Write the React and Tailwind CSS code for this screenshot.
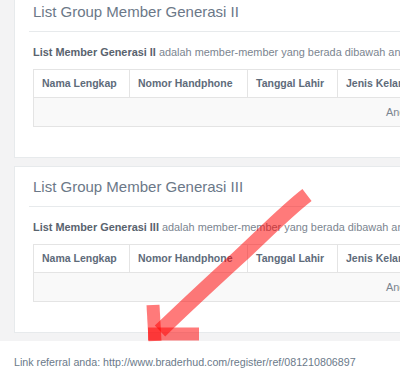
const columns = ['Nama Lengkap', 'Nomor Handphone', 'Tanggal Lahir', 'Jenis Kelamin', 'Alamat', 'Tanggal Daftar'];
const widths = ['w-[96px]', 'w-[118px]', 'w-[90px]', 'w-[110px]', 'w-[110px]', 'w-[120px]'];

const MemberPanel = ({ generasi }) => (
    <div className="w-[440px] shrink-0 border border-[#e7eaec] bg-white pb-[30px] pt-[10px]">
        <div className="mx-[14px] border-b border-[#e7eaec] px-1 pb-[9px]">
            <h2 className="text-[15px] leading-[20px] text-[#6b7888]">List Group Member Generasi {generasi}</h2>
        </div>
        <div className="pl-[18px]">
            <p className="mt-[12px] whitespace-nowrap text-[10.9px] leading-[17px] text-[#7b8590]">
                <b className="text-[#59636e]">List Member Generasi {generasi}</b> adalah member-member yang berada dibawah anda
            </p>
            <div className="mt-[8px] w-[660px] border border-[#e4e4e4]">
                <div className="flex h-[28px] border-b border-[#e4e4e4] bg-white">
                    {columns.map((col, i) => (
                        <div
                            key={col}
                            className={`${widths[i]} flex shrink-0 items-center whitespace-nowrap border-r border-[#e4e4e4] pl-[8px] text-[10.5px] font-bold text-[#5e6b7a]`}
                        >
                            {col}
                        </div>
                    ))}
                </div>
                <div className="flex h-[28px] items-center whitespace-nowrap bg-[#f9f9f9] pl-[352px] text-[10.9px] text-[#7b8590]">
                    Anda belum memiliki member generasi {generasi}
                </div>
            </div>
        </div>
    </div>
);

export default function App() {
    return (
        <div className="relative h-[379px] w-[400px] overflow-hidden bg-white font-['Liberation_Sans',Arial,sans-serif]">
            <div className="-mt-[9px] flex flex-col gap-[8px] bg-[#f3f3f4] pb-[8px] pl-[14px]">
                <MemberPanel generasi="II" />
                <MemberPanel generasi="III" />
            </div>
            <p className="pl-[14px] pt-[13px] text-[10.7px] leading-[17px] text-[#6b7a8a]">
                Link referral anda: http://www.braderhud.com/register/ref/081210806897
            </p>

            <svg className="pointer-events-none absolute left-0 top-0" width="400" height="379" viewBox="0 0 400 379">
                <path d="M307 195 C 285 212, 262 236, 238 258 S 190 302, 160 331" fill="none" stroke="#ff0000" strokeOpacity="0.52" strokeWidth="15" />
                <path d="M153 305 L155 341" fill="none" stroke="#ff0000" strokeOpacity="0.52" strokeWidth="13" />
                <path d="M148 334 L199 334" fill="none" stroke="#ff0000" strokeOpacity="0.52" strokeWidth="13" />
            </svg>
        </div>
    );
}
